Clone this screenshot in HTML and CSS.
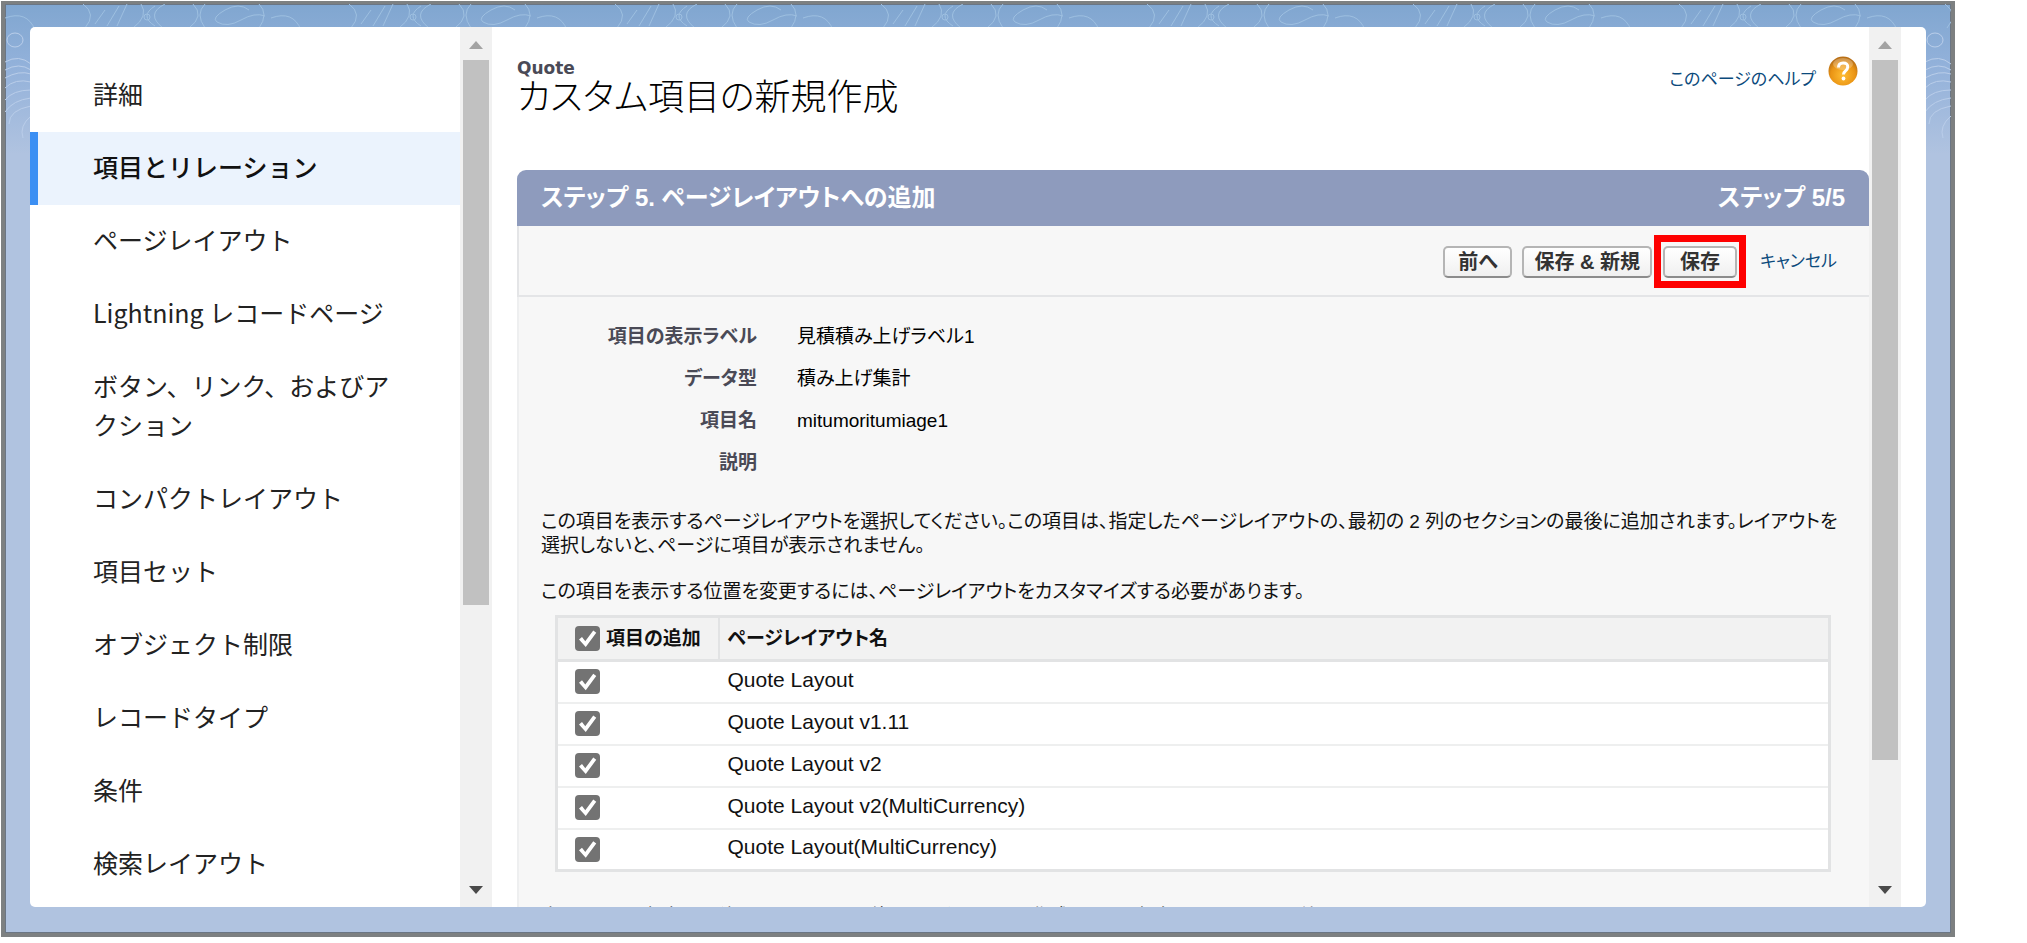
FILE: index.html
```html
<!DOCTYPE html>
<html lang="ja">
<head>
<meta charset="utf-8">
<meta name="viewport" content="width=device-width, initial-scale=1">
<title>カスタム項目の新規作成</title>
<link rel="stylesheet" href="styles.css">
</head>
<body>
<div class="frame">
  <svg class="contours" aria-hidden="true">
    <defs>
      <pattern id="topo" width="266" height="120" patternUnits="userSpaceOnUse">
        <g fill="none" stroke="#9dbfe0" stroke-width="1">
          <path d="M0 14q22-8 30 12M78 0q14 10 2 24M90 20l10-14M102 22l12-20M112 22l10-22"/>
          <path d="M188 0q12 12-4 24M200 0q-10 10 0 24M244 6q-10-8-24 0t-8 12q10 6 24-2t24-4M254 0q10 10 0 24"/>
          <path d="M150 22q-16-10 0-20M160 0q-20 10-2 24M136 0q8 12-8 24"/>
          <circle cx="142" cy="13" r="3"/>
        </g>
      </pattern>
      <pattern id="topo-side" width="40" height="240" patternUnits="userSpaceOnUse">
        <g fill="none" stroke="#b9cde9" stroke-width="1">
          <ellipse cx="10" cy="36" rx="8" ry="7"/>
          <path d="M0 58q14-8 26 2M0 66q14-8 26 0M0 74q14-8 26-4M0 84q10-10 26-6M0 96q8-10 26-10M0 108q8-12 26-14M4 120q0-14 22-18M18 134q-4-12 8-22"/>
        </g>
      </pattern>
    </defs>
    <rect width="100%" height="24" fill="url(#topo)"/>
    <rect y="24" width="100%" height="130" fill="url(#topo-side)"/>
  </svg>
  <div class="panel">
    <nav class="side">
      <ul class="side-list">
        <li><a class="side-link" href="#">詳細</a></li>
        <li><a class="side-link is-active" href="#" aria-current="page">項目とリレーション</a></li>
        <li><a class="side-link" href="#">ページレイアウト</a></li>
        <li><a class="side-link" href="#">Lightning レコードページ</a></li>
        <li><a class="side-link" href="#">ボタン、リンク、およびアクション</a></li>
        <li><a class="side-link" href="#">コンパクトレイアウト</a></li>
        <li><a class="side-link" href="#">項目セット</a></li>
        <li><a class="side-link" href="#">オブジェクト制限</a></li>
        <li><a class="side-link" href="#">レコードタイプ</a></li>
        <li><a class="side-link" href="#">条件</a></li>
        <li><a class="side-link" href="#">検索レイアウト</a></li>
      </ul>
    </nav>
    <div class="scroll scroll-side" aria-hidden="true">
      <span class="arrow arrow-up"></span>
      <span class="rail"><span class="thumb thumb-side"></span></span>
      <span class="arrow arrow-down"></span>
    </div>
    <main class="main">
      <header class="head">
        <div>
          <p class="kicker">Quote</p>
          <h1 class="title">カスタム項目の新規作成</h1>
        </div>
        <a class="help" href="#">このページのヘルプ
          <svg class="help-icon" viewBox="0 0 30 30" aria-hidden="true">
            <defs>
              <radialGradient id="orb" cx=".5" cy=".65" r=".6">
                <stop offset="0" stop-color="#ffbd33"/>
                <stop offset=".7" stop-color="#ea9414"/>
                <stop offset="1" stop-color="#b96f14"/>
              </radialGradient>
            </defs>
            <circle cx="15" cy="15" r="14.500" fill="url(#orb)"/>
            <ellipse cx="15" cy="8" rx="10" ry="6" fill="#fff" opacity=".25"/>
            <path d="M10.500 11.500q0-4.500 4.700-4.500t4.500 4q0 2.500-2.500 4.200-1.700 1.300-1.700 3.300" fill="none" stroke="#fff" stroke-width="3"/>
            <circle cx="15.500" cy="22.500" r="1.900" fill="#fff"/>
          </svg>
        </a>
      </header>
      <form class="step">
        <div class="step-bar">
          <h2 class="step-title">ステップ 5. ページレイアウトへの追加</h2>
          <span class="step-title">ステップ 5/5</span>
        </div>
        <div class="actions">
          <button class="btn" type="button">前へ</button>
          <button class="btn" type="button">保存 &amp; 新規</button>
          <span class="marked"><button class="btn btn-save" type="button">保存</button></span>
          <a class="cancel" href="#">キャンセル</a>
        </div>
        <div class="step-body">
          <dl class="facts">
            <dt>項目の表示ラベル</dt><dd>見積積み上げラベル1</dd>
            <dt>データ型</dt><dd>積み上げ集計</dd>
            <dt>項目名</dt><dd>mitumoritumiage1</dd>
            <dt>説明</dt><dd></dd>
          </dl>
          <p class="note">この項目を表示するページレイアウトを選択してください。この項目は、指定したページレイアウトの、最初の 2 列のセクションの最後に追加されます。レイアウトを<br>選択しないと、ページに項目が表示されません。</p>
          <p class="note">この項目を表示する位置を変更するには、ページレイアウトをカスタマイズする必要があります。</p>
          <table class="layouts">
            <thead>
              <tr><th class="pick"><label class="pick-all"><input class="check" type="checkbox" checked>項目の追加</label></th><th>ページレイアウト名</th></tr>
            </thead>
            <tbody>
              <tr><td class="pick"><input class="check" id="l1" type="checkbox" checked></td><td><label for="l1">Quote Layout</label></td></tr>
              <tr><td class="pick"><input class="check" id="l2" type="checkbox" checked></td><td><label for="l2">Quote Layout v1.11</label></td></tr>
              <tr><td class="pick"><input class="check" id="l3" type="checkbox" checked></td><td><label for="l3">Quote Layout v2</label></td></tr>
              <tr><td class="pick"><input class="check" id="l4" type="checkbox" checked></td><td><label for="l4">Quote Layout v2(MultiCurrency)</label></td></tr>
              <tr><td class="pick"><input class="check" id="l5" type="checkbox" checked></td><td><label for="l5">Quote Layout(MultiCurrency)</label></td></tr>
            </tbody>
          </table>
          <p class="note">完了したら、[保存 &amp; 新規] をクリックして他のカスタム項目を作成するか、[保存] をクリックして終了します。</p>
        </div>
      </form>
    </main>
    <div class="scroll scroll-main" aria-hidden="true">
      <span class="arrow arrow-up"></span>
      <span class="rail"><span class="thumb thumb-main"></span></span>
      <span class="arrow arrow-down"></span>
    </div>
  </div>
</div>
</body>
</html>
```
FILE: styles.css
```css
* { box-sizing: border-box; }

body {
  margin: 0;
  height: 100vh;
  padding: 1px 72px 6px 1px;
  background: #fff;
  color: #111;
  font-family: "Liberation Sans", "Noto Sans CJK JP", sans-serif;
  font-size: 19px;
  line-height: 24px;
  overflow: hidden;
}

a { text-decoration: none; }

.frame {
  position: relative;
  height: 100%;
  padding: 23px 25px 26px;
  border: 4px solid #7d8081;
  border-top-width: 3px;
  background: linear-gradient(#80a6d0, #92b1da 60px, #b0c3e0 150px);
  box-shadow: inset 0 0 0 1px #6b7684;
}

.contours {
  position: absolute;
  top: 0;
  left: 0;
  width: 100%;
  height: 100%;
}

.panel {
  position: relative;
  display: flex;
  height: 100%;
  border-radius: 5px;
  background: #fff;
  overflow: hidden;
}

/* Object manager menu */
.side {
  flex: 0 0 430px;
  padding-top: 32px;
}

.side-list {
  margin: 0;
  padding: 0;
  list-style: none;
}

.side-link {
  display: block;
  padding: 15px 60px 19px 55px;
  border-left: 8px solid transparent;
  color: #222;
  font-family: "Noto Sans CJK JP", sans-serif;
  font-size: 25px;
  line-height: 39px;
}

.side-link.is-active {
  border-left-color: #3b8ff3;
  background: #ebf3fd;
  color: #111;
  font-weight: 500;
}

/* Scroll bars */
.scroll {
  display: flex;
  flex-direction: column;
  align-items: center;
  padding: 14px 0 13px;
  background: #f1f1f1;
}

.scroll-side { flex: 0 0 32px; }
.scroll-main { flex: 0 0 32px; margin-right: 25px; }

.arrow {
  border: 7px solid transparent;
}

.arrow-up {
  border-top-width: 0;
  border-bottom: 8px solid #a3a3a3;
}

.arrow-down {
  border-bottom-width: 0;
  border-top: 8px solid #4a4a4a;
}

.rail {
  flex: 1;
  margin: 11px 0 12px;
}

.thumb {
  display: block;
  width: 26px;
  background: #c1c1c1;
}

.thumb-side { height: 67%; }
.thumb-main { height: 86%; }

/* Wizard page */
.main {
  flex: 1;
  min-width: 0;
  display: flex;
  flex-direction: column;
  padding-left: 25px;
  font-feature-settings: "palt";
}

.head {
  display: flex;
  justify-content: space-between;
  padding: 29px 11px 0 0;
  height: 143px;
}

.kicker {
  margin: 0;
  color: #4a4a56;
  font-family: "DejaVu Sans", sans-serif;
  font-size: 17px;
  font-weight: 700;
}

.title {
  margin: 0;
  color: #000;
  font-size: 36px;
  font-weight: 300;
  line-height: 36px;
}

.help {
  display: flex;
  gap: 12px;
  align-items: flex-start;
  padding-top: 12px;
  color: #0b4a7c;
  font-size: 17px;
}

.help-icon {
  width: 30px;
  height: 30px;
  margin-top: -12px;
}

.step {
  flex: 1;
  min-height: 0;
}

.step-bar {
  display: flex;
  justify-content: space-between;
  padding: 12px 24px;
  border-radius: 9px 9px 0 0;
  background: #8e9bbd;
  color: #fff;
}

.step-title {
  margin: 0;
  font-size: 24px;
  font-weight: 700;
  line-height: 32px;
}

.actions {
  display: flex;
  justify-content: flex-end;
  align-items: center;
  padding: 9px 32px 7px 0;
  border: 2px solid #e4e5e7;
  border-top-width: 0;
  border-right: 0;
  background: #f7f7f7;
}

.btn {
  height: 32px;
  margin-right: 10px;
  padding: 0 10px;
  min-width: 69px;
  border: 2px solid #b5b5b5;
  border-bottom-color: #8c8c8c;
  border-radius: 5px;
  background: linear-gradient(#fff, #f0f0f0);
  color: #333;
  font: inherit;
  font-size: 20px;
  font-weight: 700;
  line-height: 24px;
  white-space: nowrap;
}

.marked {
  display: flex;
  margin: 0 14px 0 -8px;
  padding: 4px 2px 3px;
  border: 7px solid #fe0000;
}

.btn-save {
  width: 74px;
  margin: 0;
}

.cancel {
  color: #0b4a7c;
  font-size: 17px;
}

.step-body {
  padding: 19px 38px 0 22px;
  border-left: 2px solid #eeeff0;
  background: #f7f7f7;
}

.facts {
  display: grid;
  grid-template-columns: 216px 1fr;
  column-gap: 40px;
  margin: 0 0 26px;
  line-height: 42px;
}

.facts dt {
  color: #4a4a56;
  font-weight: 700;
  text-align: right;
}

.facts dd {
  margin: 0;
  color: #000;
}

.note {
  margin: 0 0 22px;
  color: #111;
  white-space: nowrap;
}

.layouts {
  width: calc(100% - 14px);
  margin: -11px 0 33px 14px;
  border: 3px solid #e2e3e4;
  border-collapse: collapse;
  background: #fff;
}

.layouts th {
  height: 44px;
  padding: 0 8px;
  border-right: 2px solid #e2e3e4;
  border-bottom: 3px solid #e2e3e4;
  background: #f2f2f2;
  text-align: left;
}

.layouts td {
  height: 42px;
  padding: 0 9px 4px;
  border-bottom: 2px solid #eeefef;
  color: #111;
  font-size: 21px;
}

.layouts .pick {
  width: 162px;
  padding: 0 10px 0 17px;
  white-space: nowrap;
}

.pick-all {
  display: flex;
  gap: 6px;
  align-items: center;
}

.check {
  appearance: none;
  display: block;
  flex: none;
  width: 25px;
  height: 25px;
  margin: 0;
  border-radius: 4px;
  background: #737373;
}

.check::before {
  content: "";
  display: block;
  width: 25px;
  height: 25px;
  background: #fff;
  clip-path: polygon(16% 54%, 28% 44%, 41% 61%, 73% 18%, 85% 27%, 43% 84%);
}
```
